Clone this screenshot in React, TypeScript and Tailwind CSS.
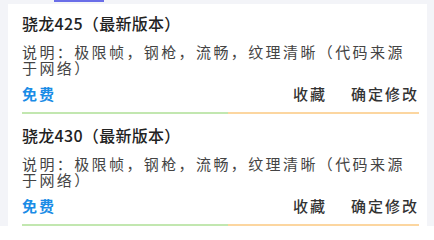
const items = [
  { id: 1, title: "骁龙425（最新版本）", desc: "说明：极限帧，钢枪，流畅，纹理清晰（代码来源于网络）" },
  { id: 2, title: "骁龙430（最新版本）", desc: "说明：极限帧，钢枪，流畅，纹理清晰（代码来源于网络）" },
];

const App = () => {
  return (
    <div
      className="w-[434px] h-[226px] overflow-hidden bg-[#f3f4f8]"
      style={{ fontFamily: '"Noto Sans CJK SC", "Noto Sans", sans-serif' }}
    >
      {/* tab indicator strip */}
      <div className="h-1 flex">
        <div className="ml-[54px] w-[50px] h-[2px] bg-[#6a6ee8]" />
      </div>

      <div className="ml-2 mr-[7px] bg-white px-3.5 pr-2">
        {items.map((item) => (
          <div key={item.id} className="pt-[9px]">
            <div className="text-[16px] leading-5 font-medium tracking-[0.3px] text-[#222]">{item.title}</div>
            <p className="mt-[11px] text-[15px] leading-4 tracking-[2.4px] text-[#444]">{item.desc}</p>
            <div className="mt-2 flex items-center h-5 text-[15px] font-medium tracking-[2px]">
              <span className="text-[#1a8ce6] font-semibold">免费</span>
              <span className="ml-auto text-[#333]">收藏</span>
              <span className="ml-6 text-[#333]">确定修改</span>
            </div>
            <div className="mt-2 mb-[2px] h-[2px] flex">
              <div className="w-[52%] bg-[#c2e7b0]" />
              <div className="flex-1 bg-[#fcd6a0]" />
            </div>
          </div>
        ))}
      </div>
    </div>
  );
};

export default App;
